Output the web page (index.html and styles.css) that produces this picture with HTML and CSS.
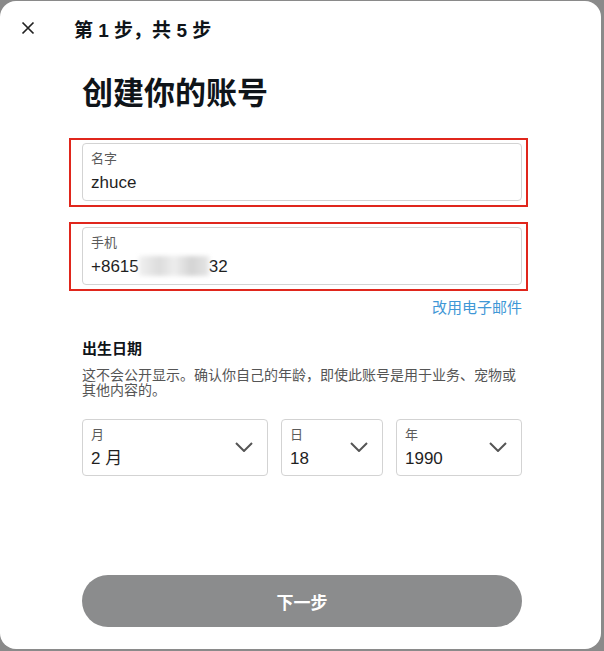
FILE: index.html
```html
<!DOCTYPE html>
<html lang="zh-CN">
<head>
  <meta charset="UTF-8" />
  <meta name="viewport" content="width=device-width, initial-scale=1.0" />
  <title>创建你的账号</title>
  <link rel="stylesheet" href="styles.css">
</head>
<body>
  <div class="dialog">
    <div class="header">
      <button class="close" aria-label="关闭">
        <svg width="14" height="14" viewBox="0 0 14 14"><path d="M1.5 1.5 L12.5 12.5 M12.5 1.5 L1.5 12.5" stroke="#222" stroke-width="1.7" fill="none"/></svg>
      </button>
      <span class="step">第 1 步，共 5 步</span>
    </div>

    <div class="content">
      <h1>创建你的账号</h1>

      <div class="marked">
        <div class="field">
          <span class="field-label">名字</span>
          <span class="field-value">zhuce</span>
        </div>
      </div>

      <div class="marked second">
        <div class="field">
          <span class="field-label">手机</span>
          <span class="field-value">+8615<span class="redact"></span>32</span>
        </div>
      </div>

      <div class="switch"><a href="#">改用电子邮件</a></div>

      <h2>出生日期</h2>
      <p class="hint">这不会公开显示。确认你自己的年龄，即使此账号是用于业务、宠物或其他内容的。</p>

      <div class="dob">
        <div class="field select">
          <span class="field-label">月</span>
          <span class="field-value">2 月</span>
          <svg class="chevron" width="18" height="10" viewBox="0 0 18 10"><path d="M1 1 L9 9 L17 1" stroke="#555" stroke-width="2" fill="none"/></svg>
        </div>
        <div class="field select">
          <span class="field-label">日</span>
          <span class="field-value">18</span>
          <svg class="chevron" width="18" height="10" viewBox="0 0 18 10"><path d="M1 1 L9 9 L17 1" stroke="#555" stroke-width="2" fill="none"/></svg>
        </div>
        <div class="field select">
          <span class="field-label">年</span>
          <span class="field-value">1990</span>
          <svg class="chevron" width="18" height="10" viewBox="0 0 18 10"><path d="M1 1 L9 9 L17 1" stroke="#555" stroke-width="2" fill="none"/></svg>
        </div>
      </div>

      <button class="next">下一步</button>
    </div>
  </div>
</body>
</html>
```

FILE: styles.css
```css
body {
  margin: 0;
  background-color: #8a8a8a;
  font-family: "Liberation Sans", "Noto Sans CJK SC", sans-serif;
  color: #0f1419;
}
.dialog {
  width: 601px;
  height: 648px;
  margin-top: 1px;
  background-color: #ffffff;
  border-radius: 16px;
  box-sizing: border-box;
}
.header {
  display: flex;
  align-items: center;
  height: 54px;
}
.close {
  width: 30px;
  height: 30px;
  margin-left: 13px;
  padding: 0;
  border: none;
  background: none;
  display: flex;
  align-items: center;
  justify-content: center;
}
.step {
  margin-left: 31px;
  font-size: 19px;
  font-weight: bold;
}
.content {
  width: 440px;
  margin-left: 82px;
}
h1 {
  margin: 19px 0 24px;
  font-size: 31px;
  line-height: 40px;
  font-weight: bold;
}
.marked {
  margin: 0 -6px 0 -13px;
  padding: 3px 4px 4px 11px;
  border: 2px solid #e0261c;
}
.marked.second {
  margin-top: 15px;
}
.field {
  height: 58px;
  box-sizing: border-box;
  border: 1px solid #d3d3d3;
  border-radius: 4px;
  padding: 7px 8px 0;
  display: flex;
  flex-direction: column;
}
.field-label {
  font-size: 13px;
  line-height: 16px;
  color: #5b5b5b;
}
.field-value {
  margin-top: 5px;
  font-size: 17px;
  line-height: 22px;
  color: #1f1f1f;
}
.redact {
  display: inline-block;
  width: 70px;
  height: 20px;
  vertical-align: -4px;
  background: linear-gradient(90deg, #f0f0f0 0%, #dcdcdc 30%, #eeeeee 50%, #d4d4d4 75%, #e6e6e6 100%);
  filter: blur(2px);
}
.switch {
  margin-top: 7px;
  text-align: right;
  font-size: 15px;
  line-height: 20px;
}
.switch a {
  color: #3f97d6;
  text-decoration: none;
}
h2 {
  margin: 21px 0 0;
  font-size: 15px;
  line-height: 20px;
  font-weight: bold;
}
.hint {
  margin: 9px 0 0;
  font-size: 14px;
  line-height: 15px;
  color: #555;
}
.dob {
  display: grid;
  grid-template-columns: 186px 102px 126px;
  gap: 13px;
  margin-top: 21px;
}
.select {
  position: relative;
  height: 57px;
}
.chevron {
  position: absolute;
  right: 14px;
  top: 22px;
}
.next {
  display: block;
  width: 100%;
  height: 52px;
  margin-top: 99px;
  border: none;
  border-radius: 26px;
  background-color: #8b8c8d;
  color: #ffffff;
  font-family: "Noto Sans CJK SC", sans-serif;
  font-size: 17px;
  font-weight: bold;
}
```
